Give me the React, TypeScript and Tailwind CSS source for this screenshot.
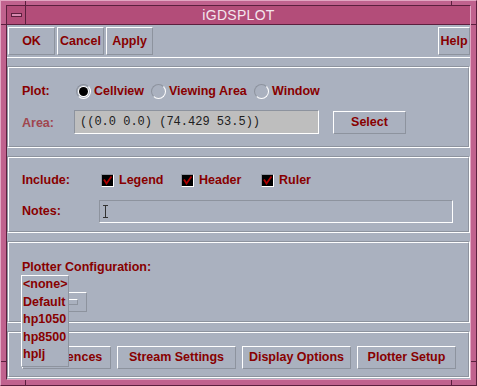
import React from "react";

const RED = "text-[#880000]";

function Btn({ w, h = "h-[28px]", children }: { w: string; h?: string; children: React.ReactNode }) {
  return (
    <div className={`${w} ${h} shrink-0 flex items-center justify-center border border-t-white border-l-white border-b-[#8d939e] border-r-[#8d939e] font-bold text-[12.5px] ${RED}`}>
      {children}
    </div>
  );
}

function Radio({ on, label, w }: { on?: boolean; label: string; w: string }) {
  return (
    <div className={`${w} flex items-center gap-[3px]`}>
      <span className="w-[15px] h-[15px] shrink-0 rounded-full border border-t-[#8d939e] border-l-[#8d939e] border-b-white border-r-white flex items-center justify-center">
        {on && <span className="w-[9px] h-[9px] rounded-full bg-black ring-1 ring-white" />}
      </span>
      <span className={`font-bold text-[12.5px] ${RED}`}>{label}</span>
    </div>
  );
}

function Check({ label, w }: { label: string; w: string }) {
  return (
    <div className={`${w} flex items-center gap-[5px]`}>
      <span className="w-[13px] h-[13px] shrink-0 bg-black border border-t-[#8d939e] border-l-[#8d939e] border-b-white border-r-white flex items-center justify-center">
        <svg width="9" height="9" viewBox="0 0 9 9">
          <path d="M1 3.5 L3.5 7.5 L8.5 0.5" stroke="#b00000" strokeWidth="1.8" fill="none" />
        </svg>
      </span>
      <span className={`font-bold text-[12.5px] ${RED}`}>{label}</span>
    </div>
  );
}

function Group({ h, className = "", children }: { h: string; className?: string; children?: React.ReactNode }) {
  // etched groove frame
  return (
    <div className={`${h} mt-[8px] border border-t-[#8d939e] border-l-[#8d939e] border-b-white border-r-white`}>
      <div className={`h-full border border-t-white border-l-white border-b-[#8d939e] border-r-[#8d939e] ${className}`}>
        {children}
      </div>
    </div>
  );
}

export default function App() {
  return (
    <div className="relative w-[477px] h-[386px] bg-[#c0628e] border border-t-[#e2a6c2] border-l-[#e2a6c2] border-b-[#5c1f3e] border-r-[#5c1f3e] pt-[4px] pb-[5px] px-[5px] font-['Liberation_Sans',Arial,sans-serif] overflow-hidden">
      {/* resize corner marks */}
      <div className="absolute left-[24px] top-0 w-[1px] h-[5px] bg-[#5c1f3e]" />
      <div className="absolute left-[450px] top-0 w-[1px] h-[5px] bg-[#5c1f3e]" />
      <div className="absolute left-0 top-[23px] w-[5px] h-[1px] bg-[#5c1f3e]" />
      <div className="absolute right-0 top-[23px] w-[5px] h-[1px] bg-[#5c1f3e]" />
      <div className="absolute left-0 top-[360px] w-[5px] h-[1px] bg-[#5c1f3e]" />
      <div className="absolute right-0 top-[360px] w-[5px] h-[1px] bg-[#5c1f3e]" />
      <div className="absolute left-[24px] bottom-0 w-[1px] h-[5px] bg-[#5c1f3e]" />
      <div className="absolute left-[450px] bottom-0 w-[1px] h-[5px] bg-[#5c1f3e]" />

      <div className="h-full flex flex-col border border-t-[#5c1f3e] border-l-[#5c1f3e] border-b-[#e2a6c2] border-r-[#e2a6c2]">
        {/* title bar */}
        <div className="h-[19px] shrink-0 flex bg-[#b34d79] border-b border-[#5c1f3e]">
          <div className="w-[19px] h-full flex items-center justify-center border-r border-[#5c1f3e]">
            <span className="w-[11px] h-[4px] bg-[#d88ab0] border border-[#5c1f3e]" />
          </div>
          <div className="flex-1 flex items-center justify-center pr-[19px] text-[14px] text-[#f4e6ee] tracking-[0.3px]">
            iGDSPLOT
          </div>
        </div>

        {/* body */}
        <div className="flex-1 bg-[#aab1bf] flex flex-col">
          <div className="h-[33px] shrink-0 flex items-start gap-[2px] pt-[2px] pl-[1px] border-b border-white">
            <Btn w="w-[47px]">OK</Btn>
            <Btn w="w-[47px]">Cancel</Btn>
            <Btn w="w-[47px]">Apply</Btn>
            <div className="flex-1" />
            <Btn w="w-[32px]">Help</Btn>
          </div>

          {/* plot */}
          <Group h="h-[82px]" className="pl-[13px] pt-[15px] flex flex-col">
            <div className="h-[16px] flex items-center">
              <span className={`w-[54px] font-bold text-[12.5px] ${RED}`}>Plot:</span>
              <Radio on label="Cellview" w="w-[75px]" />
              <Radio label="Viewing Area" w="w-[103px]" />
              <Radio label="Window" w="w-[90px]" />
            </div>
            <div className="mt-[11px] flex items-start">
              <span className="w-[52px] mt-[4px] font-bold text-[12.5px] text-[#a0464e]">
                Area:
              </span>
              <div className="w-[245px] h-[24px] flex items-center pl-[5px] bg-[#bebebe] border border-t-[#8d939e] border-l-[#8d939e] border-b-white border-r-white font-['Liberation_Mono',monospace] text-[12px] text-[#202020]">
                ((0.0 0.0) (74.429 53.5))
              </div>
              <div className="ml-[14px] mt-[1px]">
                <Btn w="w-[73px]" h="h-[23px]">Select</Btn>
              </div>
            </div>
          </Group>

          {/* include */}
          <Group h="h-[77px]" className="pl-[13px] pt-[14px] flex flex-col">
            <div className="h-[16px] flex items-center">
              <span className={`w-[79px] font-bold text-[12.5px] ${RED}`}>Include:</span>
              <Check label="Legend" w="w-[80px]" />
              <Check label="Header" w="w-[80px]" />
              <Check label="Ruler" w="w-[80px]" />
            </div>
            <div className="mt-[12px] flex items-center">
              <span className={`w-[77px] font-bold text-[12.5px] ${RED}`}>Notes:</span>
              <div className="w-[354px] h-[23px] flex items-center pl-[2px] border border-t-[#8d939e] border-l-[#8d939e] border-b-white border-r-white">
                <svg width="7" height="13" viewBox="0 0 7 13">
                  <path d="M1 0.5 H6 M3.5 0.5 V12.5 M1 12.5 H6" stroke="#333" strokeWidth="1" fill="none" />
                </svg>
              </div>
            </div>
          </Group>

          {/* plotter configuration */}
          <Group h="h-[82px]" className="pl-[13px] pt-[17px] flex flex-col items-start">
            <span className={`h-[14px] leading-[14px] font-bold text-[12.5px] ${RED}`}>Plotter Configuration:</span>
            <div className="mt-[18px] -ml-[1px] w-[66px] h-[20px] flex items-center justify-end pr-[8px] border border-t-white border-l-white border-b-[#8d939e] border-r-[#8d939e]">
              <span className="w-[11px] h-[6px] border border-t-white border-l-white border-b-[#8d939e] border-r-[#8d939e]" />
            </div>
          </Group>

          {/* actions */}
          <Group h="h-[47px]" className="pl-[13px] pt-[13px] flex items-start gap-[6px]">
            <Btn w="w-[89px]" h="h-[23px]">Preferences</Btn>
            <Btn w="w-[119px]" h="h-[23px]">Stream Settings</Btn>
            <Btn w="w-[109px]" h="h-[23px]">Display Options</Btn>
            <Btn w="w-[99px]" h="h-[23px]">Plotter Setup</Btn>
          </Group>
        </div>
      </div>

      {/* option menu popup */}
      <div className="absolute left-[20px] top-[274px] w-[48px] h-[92px] bg-[#aab1bf] border border-t-white border-l-white border-b-[#8d939e] border-r-[#8d939e] pl-[1px] flex flex-col">
        {["<none>", "Default", "hp1050", "hp8500", "hplj"].map((o) => (
          <div key={o} className={`h-[17.5px] flex items-center font-bold text-[12.5px] ${RED} whitespace-nowrap`}>
            {o}
          </div>
        ))}
      </div>
    </div>
  );
}
